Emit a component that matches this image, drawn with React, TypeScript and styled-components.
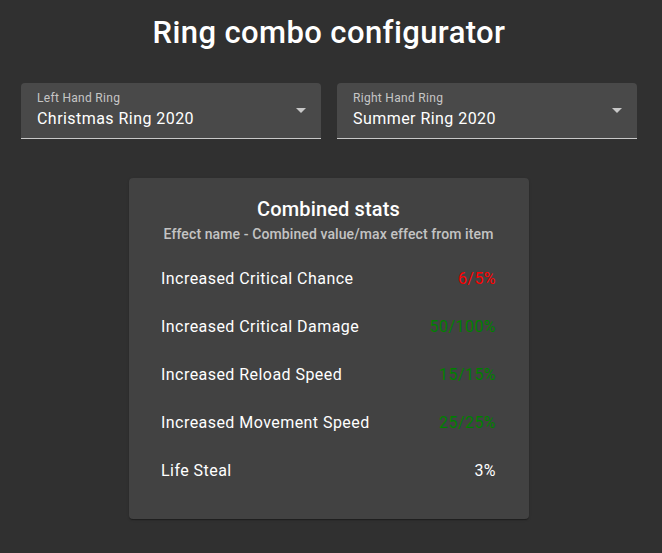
import styled, { createGlobalStyle } from 'styled-components';

const GlobalStyle = createGlobalStyle`
  html, body {
    margin: 0;
    padding: 0;
    background: #303030;
    font-family: Roboto, "Liberation Sans", sans-serif;
    color: #fff;
  }
`;

const Page = styled.div`
  width: 616px;
  margin-left: 21px;
  padding-top: 13px;
  padding-bottom: 34px;
  display: flex;
  flex-direction: column;
  align-items: center;
`;

const Title = styled.h1`
  margin: 0;
  font-size: 31px;
  line-height: 40px;
  font-weight: 500;
  letter-spacing: 0.4px;
  text-align: center;
`;

const SelectRow = styled.div`
  margin-top: 30px;
  width: 100%;
  display: grid;
  grid-template-columns: 1fr 1fr;
  gap: 16px;
`;

const SelectBox = styled.div`
  position: relative;
  height: 56px;
  background: rgba(255, 255, 255, 0.12);
  border-radius: 4px 4px 0 0;
  border-bottom: 1px solid rgba(255, 255, 255, 0.7);
  box-sizing: border-box;
  padding: 8px 16px 0;
  display: flex;
  flex-direction: column;
`;

const SelectLabel = styled.span`
  font-size: 12px;
  line-height: 14px;
  letter-spacing: 0.3px;
  color: rgba(255, 255, 255, 0.7);
`;

const SelectValue = styled.span`
  margin-top: 4px;
  font-size: 16px;
  line-height: 20px;
  letter-spacing: 0.45px;
  color: #fff;
`;

const Arrow = styled.svg`
  position: absolute;
  right: 8px;
  top: 15px;
  width: 24px;
  height: 24px;
  fill: rgba(255, 255, 255, 0.7);
`;

const Card = styled.div`
  margin-top: 39px;
  width: 400px;
  box-sizing: border-box;
  padding: 16px 33px 25px 32px;
  background: #424242;
  border-radius: 4px;
  box-shadow: 0 2px 1px -1px rgba(0, 0, 0, 0.2), 0 1px 1px 0 rgba(0, 0, 0, 0.14),
    0 1px 3px 0 rgba(0, 0, 0, 0.12);
`;

const CardTitle = styled.h2`
  margin: 0;
  font-size: 20px;
  line-height: 30px;
  font-weight: 500;
  letter-spacing: 0.15px;
  text-align: center;
`;

const CardSubtitle = styled.div`
  font-size: 14px;
  line-height: 20px;
  font-weight: 500;
  letter-spacing: 0.1px;
  color: rgba(255, 255, 255, 0.7);
  text-align: center;
  margin-bottom: 10px;
`;

const StatRow = styled.div`
  height: 48px;
  display: flex;
  align-items: center;
  justify-content: space-between;
  font-size: 16px;
  letter-spacing: 0.45px;
`;

const StatValue = styled.span<{ $color: string }>`
  color: ${p => p.$color};
`;

const stats = [
  { name: 'Increased Critical Chance', value: '6/5%', color: '#ff0000' },
  { name: 'Increased Critical Damage', value: '50/100%', color: '#008000' },
  { name: 'Increased Reload Speed', value: '15/15%', color: '#008000' },
  { name: 'Increased Movement Speed', value: '25/25%', color: '#008000' },
  { name: 'Life Steal', value: '3%', color: '#ffffff' },
];

const RingSelect = ({ label, value }: { label: string; value: string }) => (
  <SelectBox>
    <SelectLabel>{label}</SelectLabel>
    <SelectValue>{value}</SelectValue>
    <Arrow viewBox="0 0 24 24">
      <path d="M7 10l5 5 5-5z" />
    </Arrow>
  </SelectBox>
);

const App = () => (
  <>
    <GlobalStyle />
    <Page>
      <Title>Ring combo configurator</Title>
      <SelectRow>
        <RingSelect label="Left Hand Ring" value="Christmas Ring 2020" />
        <RingSelect label="Right Hand Ring" value="Summer Ring 2020" />
      </SelectRow>
      <Card>
        <CardTitle>Combined stats</CardTitle>
        <CardSubtitle>Effect name - Combined value/max effect from item</CardSubtitle>
        {stats.map(s => (
          <StatRow key={s.name}>
            <span>{s.name}</span>
            <StatValue $color={s.color}>{s.value}</StatValue>
          </StatRow>
        ))}
      </Card>
    </Page>
  </>
);

export default App;
